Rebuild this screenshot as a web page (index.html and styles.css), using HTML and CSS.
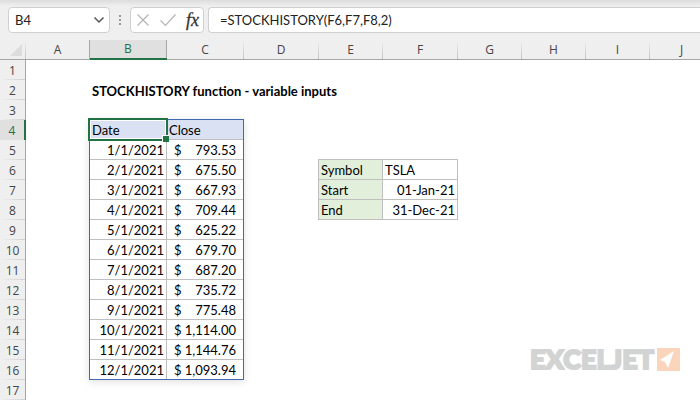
FILE: index.html
```html
<!DOCTYPE html>
<html lang="en">
<head>
<meta charset="utf-8">
<title>STOCKHISTORY function</title>
<link rel="stylesheet" href="styles.css">
</head>
<body>
<header class="bar">
  <div class="box name-box">
    <input class="name-input" aria-label="Name box" value="B4">
    <button class="tool" aria-label="Show names"><svg width="12" height="8" viewBox="0 0 12 8"><path d="M1.5 1.5 6 6l4.500-4.500" fill="none" stroke="#555" stroke-width="1.500"/></svg></button>
  </div>
  <svg class="grip" width="4" height="12" viewBox="0 0 4 12"><path d="M1 1h2v2H1zM1 5h2v2H1zM1 9h2v2H1z" fill="#999"/></svg>
  <div class="box actions">
    <button class="tool" aria-label="Cancel"><svg width="14" height="14" viewBox="0 0 14 14"><path d="M1.500 1.500l11 11M12.500 1.500l-11 11" fill="none" stroke="#b4b4b4" stroke-width="1.200"/></svg></button>
    <button class="tool" aria-label="Enter"><svg width="18" height="14" viewBox="0 0 18 14"><path d="M1.500 7.500l5 5L16.500 1.500" fill="none" stroke="#b4b4b4" stroke-width="1.200"/></svg></button>
    <button class="tool fx" aria-label="Insert function">fx</button>
  </div>
  <div class="box formula">
    <input class="formula-input" aria-label="Formula" value="=STOCKHISTORY(F6,F7,F8,2)">
  </div>
</header>
<main class="sheet">
<table class="grid">
<colgroup><col class="c-num"><col class="c-64"><col class="c-77"><col class="c-77"><col class="c-75"><col class="c-64"><col class="c-75"><col class="c-64"><col class="c-64"><col class="c-64"><col></colgroup>
<thead>
<tr><td class="corner"><svg width="12" height="12" viewBox="0 0 12 12"><path d="M12 0v12H0z" fill="#dcdcdc"/></svg></td><th class="before">A</th><th class="active">B</th><th>C</th><th>D</th><th>E</th><th>F</th><th>G</th><th>H</th><th>I</th><th class="last">J</th></tr>
</thead>
<tbody>
<tr><th>1</th><td colspan="10"></td></tr>
<tr><th>2</th><td></td><td class="title" colspan="9">STOCKHISTORY function - variable inputs</td></tr>
<tr><th>3</th><td colspan="10"></td></tr>
<tr><th class="active">4</th><td></td><td class="cell head anchor">Date<span class="range"></span><span class="selection"></span></td><td class="cell head">Close</td><td colspan="7"></td></tr>
<tr><th>5</th><td></td><td class="cell num">1/1/2021</td><td class="cell"><div class="money"><span>$</span><span>793.53</span></div></td><td colspan="7"></td></tr>
<tr><th>6</th><td></td><td class="cell num">2/1/2021</td><td class="cell"><div class="money"><span>$</span><span>675.50</span></div></td><td></td><td class="cell label top">Symbol</td><td class="cell top">TSLA</td><td colspan="4"></td></tr>
<tr><th>7</th><td></td><td class="cell num">3/1/2021</td><td class="cell"><div class="money"><span>$</span><span>667.93</span></div></td><td></td><td class="cell label">Start</td><td class="cell num">01-Jan-21</td><td colspan="4"></td></tr>
<tr><th>8</th><td></td><td class="cell num">4/1/2021</td><td class="cell"><div class="money"><span>$</span><span>709.44</span></div></td><td></td><td class="cell label">End</td><td class="cell num">31-Dec-21</td><td colspan="4"></td></tr>
<tr><th>9</th><td></td><td class="cell num">5/1/2021</td><td class="cell"><div class="money"><span>$</span><span>625.22</span></div></td><td colspan="7"></td></tr>
<tr><th>10</th><td></td><td class="cell num">6/1/2021</td><td class="cell"><div class="money"><span>$</span><span>679.70</span></div></td><td colspan="7"></td></tr>
<tr><th>11</th><td></td><td class="cell num">7/1/2021</td><td class="cell"><div class="money"><span>$</span><span>687.20</span></div></td><td colspan="7"></td></tr>
<tr><th>12</th><td></td><td class="cell num">8/1/2021</td><td class="cell"><div class="money"><span>$</span><span>735.72</span></div></td><td colspan="7"></td></tr>
<tr><th>13</th><td></td><td class="cell num">9/1/2021</td><td class="cell"><div class="money"><span>$</span><span>775.48</span></div></td><td colspan="7"></td></tr>
<tr><th>14</th><td></td><td class="cell num">10/1/2021</td><td class="cell"><div class="money"><span>$</span><span>1,114.00</span></div></td><td colspan="7"></td></tr>
<tr><th>15</th><td></td><td class="cell num">11/1/2021</td><td class="cell"><div class="money"><span>$</span><span>1,144.76</span></div></td><td colspan="7"></td></tr>
<tr><th>16</th><td></td><td class="cell num">12/1/2021</td><td class="cell"><div class="money"><span>$</span><span>1,093.94</span></div></td><td colspan="7"></td></tr>
<tr><th>17</th><td colspan="10"></td></tr>
</tbody>
</table>
<div class="brand"><span>EXCELJET</span><svg width="23" height="23" viewBox="0 0 23 23"><path d="M0 0h23v23H0z" fill="#fad5bb"/><path d="M17 3 3 12l5 2 3 6z" fill="#fff"/></svg></div>
</main>
</body>
</html>
```
FILE: styles.css
```css
* { box-sizing: border-box; }
body {
  margin: 0;
  background: #efefef;
  color: #000;
  font-family: Lato, "Liberation Sans", sans-serif;
  font-size: 13px;
}
.bar {
  display: flex;
  align-items: center;
  height: 40px;
  padding: 0 0 0 8px;
  background: linear-gradient(#dcdcdc, #efefef 6px);
}
.box {
  display: flex;
  align-items: center;
  height: 26px;
  background: #fff;
  border: 1px solid #d0d0d0;
  border-radius: 4px;
}
.name-box { width: 102px; padding: 0 4px 0 6px; }
.grip { margin: 0 8px; }
.actions { width: 74px; padding: 0 4px 0 5px; justify-content: space-between; margin-right: 4px; }
.formula { flex: 1; padding-left: 11px; border-right: 0; border-radius: 4px 0 0 4px; }
input {
  flex: 1;
  min-width: 0;
  padding: 0;
  border: 0;
  outline: 0;
  background: none;
  color: #222;
  font-family: inherit;
  font-size: 13px;
}
.tool { display: flex; padding: 0; border: 0; background: none; }
.fx {
  color: #333;
  font: italic 18px/20px "Liberation Serif", serif;
  -webkit-text-stroke: 0.3px #333;
}
.sheet { position: relative; overflow: hidden; background: #fff; }
.grid {
  width: max(100%, 714px);
  table-layout: fixed;
  border-collapse: separate;
  border-spacing: 0;
}
.c-num { width: 26px; }
.c-64 { width: 64px; }
.c-75 { width: 75px; }
.c-77 { width: 77px; }
td, th { height: 20px; padding: 2px 0 0; line-height: 17px; white-space: nowrap; }
th {
  padding: 0 1px 0 0;
  background: #efefef;
  color: #444;
  font-family: "Open Sans", "Noto Sans", sans-serif;
  font-size: 12px;
  font-weight: 400;
  line-height: 19px;
  text-align: center;
}
thead th {
  background: linear-gradient(#efefef, #c4c4c4) right / 1px 100% no-repeat #efefef;
  border-bottom: 1px solid #a6a6a6;
}
thead .last { background: #efefef; }
thead .before { background: linear-gradient(#a6a6a6, #a6a6a6) right / 1px 100% no-repeat #efefef; }
.corner {
  padding: 0;
  background: linear-gradient(#efefef, #c4c4c4) right / 1px 100% no-repeat #efefef;
  border-bottom: 1px solid #a6a6a6;
}
.corner svg { display: block; margin-left: 10px; }
tbody th {
  padding-right: 0;
  background: linear-gradient(90deg, #efefef, #d0d0d0) bottom / 100% 1px no-repeat #efefef;
  border-right: 1px solid #a6a6a6;
}
th.active { background: #e0e0e0; color: #217346; }
thead th.active {
  background: linear-gradient(#a6a6a6, #a6a6a6) right / 1px 100% no-repeat #e0e0e0;
  border-bottom: 2px solid #217346;
  line-height: 18px;
}
tbody th.active { background: #e0e0e0; border-right: 2px solid #217346; }
.title { padding-left: 2px; font-weight: 700; }
.cell {
  padding: 2px 2px 0;
  border-right: 1px solid #bfbfbf;
  border-bottom: 1px solid #bfbfbf;
}
.head { background: #d9e1f2; }
.num { text-align: right; }
.money { display: flex; justify-content: space-between; padding: 0 5px; }
.label { background: #e2efda; box-shadow: -1px 0 #bfbfbf; }
.top { box-shadow: 0 -1px #bfbfbf; }
.label.top { box-shadow: -1px 0 #bfbfbf, 0 -1px #bfbfbf, -1px -1px #bfbfbf; }
.anchor { position: relative; }
.range, .selection { position: absolute; pointer-events: none; }
.range {
  top: -1px;
  left: -1px;
  width: 155px;
  height: 261px;
  border: 1px solid #4269b0;
  box-shadow: 0 2px 8px rgba(0, 0, 0, 0.12);
}
.selection {
  top: -2px;
  left: -2px;
  width: 80px;
  height: 23px;
  border: 2px solid #217346;
  box-shadow: inset 0 0 0 1px #fff;
}
.selection::after {
  content: "";
  position: absolute;
  right: -3px;
  bottom: -3px;
  width: 6px;
  height: 6px;
  background: #217346;
  border-top: 1px solid #fff;
  border-left: 1px solid #fff;
}
.brand {
  position: absolute;
  right: 20px;
  bottom: 24px;
  display: flex;
  align-items: center;
  gap: 3px;
  color: #d2d4d3;
  font-size: 27px;
  font-weight: 900;
  line-height: 34px;
  -webkit-text-stroke: 2px #d2d4d3;
}
```
